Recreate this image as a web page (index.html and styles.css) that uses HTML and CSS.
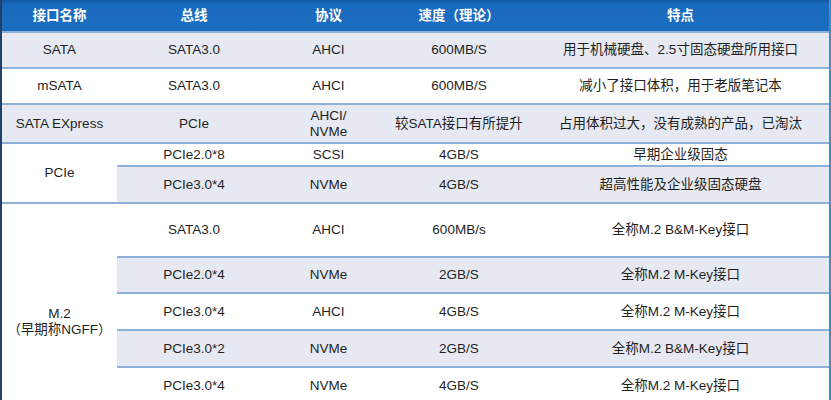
FILE: index.html
```html
<!DOCTYPE html>
<html lang="zh">
<head>
<meta charset="utf-8">
<link rel="stylesheet" href="styles.css">
</head>
<body>
<table class="spec">
  <colgroup>
    <col class="c1"><col class="c2"><col class="c3"><col class="c4"><col class="c5">
  </colgroup>
  <thead>
    <tr class="head">
      <th>接口名称</th><th>总线</th><th>协议</th><th>速度（理论）</th><th>特点</th>
    </tr>
  </thead>
  <tbody>
    <tr class="r36 alt">
      <td>SATA</td><td>SATA3.0</td><td>AHCI</td><td>600MB/S</td><td>用于机械硬盘、2.5寸固态硬盘所用接口</td>
    </tr>
    <tr class="r36">
      <td>mSATA</td><td>SATA3.0</td><td>AHCI</td><td>600MB/S</td><td>减小了接口体积，用于老版笔记本</td>
    </tr>
    <tr class="r39 alt">
      <td>SATA EXpress</td><td>PCIe</td><td>AHCI/<br>NVMe</td><td>较SATA接口有所提升</td><td>占用体积过大，没有成熟的产品，已淘汰</td>
    </tr>
    <tr class="r23">
      <td rowspan="2" class="plain">PCIe</td><td>PCIe2.0*8</td><td>SCSI</td><td>4GB/S</td><td>早期企业级固态</td>
    </tr>
    <tr class="r37 alt">
      <td>PCIe3.0*4</td><td>NVMe</td><td>4GB/S</td><td>超高性能及企业级固态硬盘</td>
    </tr>
    <tr class="r54">
      <td rowspan="6" class="plain">M.2<br>（早期称NGFF）</td><td>SATA3.0</td><td>AHCI</td><td>600MB/s</td><td>全称M.2 B&amp;M-Key接口</td>
    </tr>
    <tr class="r36 alt">
      <td>PCIe2.0*4</td><td>NVMe</td><td>2GB/S</td><td>全称M.2 M-Key接口</td>
    </tr>
    <tr class="r37">
      <td>PCIe3.0*4</td><td>AHCI</td><td>4GB/S</td><td>全称M.2 M-Key接口</td>
    </tr>
    <tr class="r37 alt">
      <td>PCIe3.0*2</td><td>NVMe</td><td>2GB/S</td><td>全称M.2 B&amp;M-Key接口</td>
    </tr>
    <tr class="r37">
      <td>PCIe3.0*4</td><td>NVMe</td><td>4GB/S</td><td>全称M.2 M-Key接口</td>
    </tr>
    <tr class="r37 alt">
      <td></td><td></td><td></td><td></td>
    </tr>
  </tbody>
</table>
</body>
</html>
```
FILE: styles.css
```css
html, body {
  margin: 0;
  padding: 0;
  background: #ffffff;
  overflow: hidden;
  height: 400px;
}
body {
  font-family: "Liberation Sans", "Noto Sans CJK SC", sans-serif;
  font-size: 13.5px;
  color: #1f1f1f;
}
.spec {
  width: 831px;
  border-collapse: separate;
  border-spacing: 0;
  table-layout: fixed;
  border-left: 2px solid #22406e;
  border-right: 2px solid #4b88c8;
}
.c1 { width: 115px; }
.c2 { width: 154px; }
.c3 { width: 115px; }
.c4 { width: 146px; }
.c5 { width: 297px; }
.spec th, .spec td {
  padding: 0;
  text-align: center;
  vertical-align: middle;
  line-height: 16px;
}
.head {
  height: 31px;
}
.head th {
  background: linear-gradient(#0f5aa6 0, #1a6bbd 5px, #1b6dc0 100%);
  color: #ffffff;
  font-weight: bold;
  font-size: 13.5px;
}
.spec td {
  border-top: 2px solid #8db0d8;
  background: #ffffff;
}
.alt td {
  background: #e6e9f2;
}
.alt td.plain, td.plain {
  background: #ffffff;
}
.r23 { height: 23px; }
.r36 { height: 36px; }
.r37 { height: 37px; }
.r39 { height: 39px; }
.r54 { height: 54px; }
```
